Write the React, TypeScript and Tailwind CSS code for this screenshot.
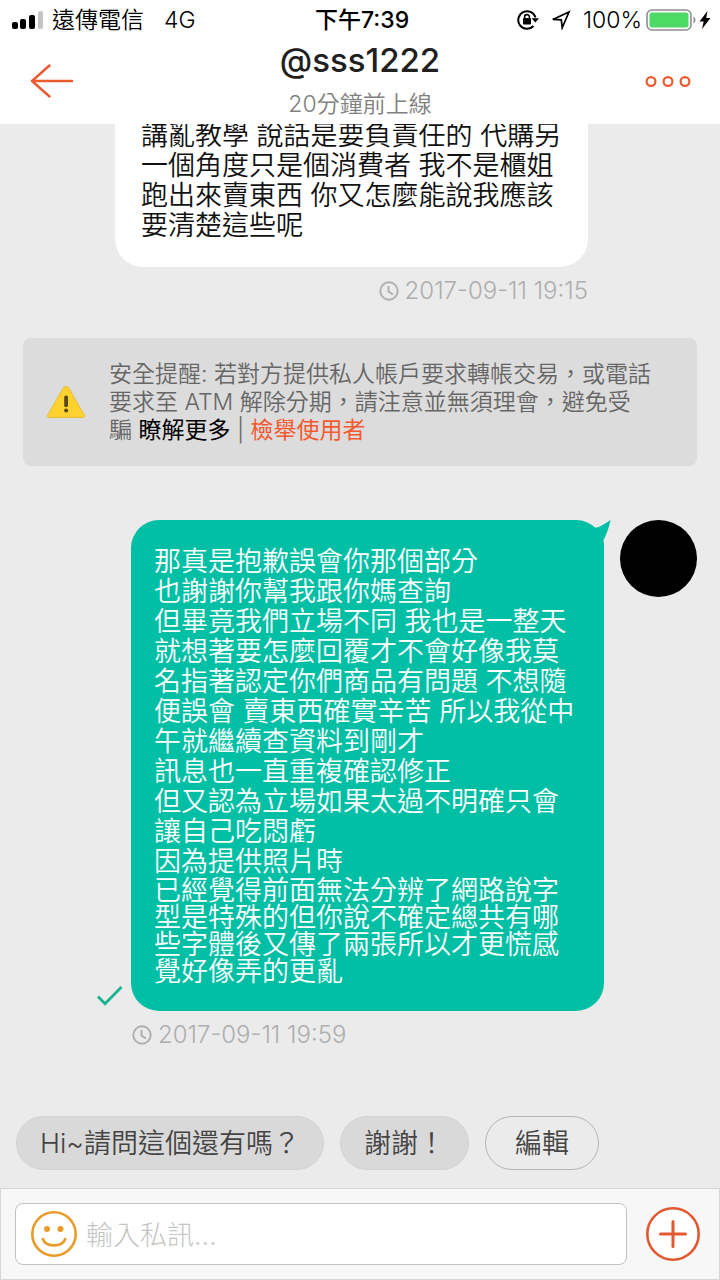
import React from "react";

const BUYER_MESSAGE =
  "講亂教學 說話是要負責任的 代購另一個角度只是個消費者 我不是櫃姐跑出來賣東西 你又怎麼能說我應該要清楚這些呢";

const MY_MESSAGE = [
  "那真是抱歉誤會你那個部分",
  "也謝謝你幫我跟你媽查詢",
  "但畢竟我們立場不同 我也是一整天就想著要怎麼回覆才不會好像我莫名指著認定你們商品有問題 不想隨便誤會 賣東西確實辛苦 所以我從中午就繼續查資料到剛才",
  "訊息也一直重複確認修正",
  "但又認為立場如果太過不明確只會讓自己吃悶虧",
  "因為提供照片時",
];

const MY_MESSAGE_END =
  "已經覺得前面無法分辨了網路說字型是特殊的但你說不確定總共有哪些字體後又傳了兩張所以才更慌感覺好像弄的更亂";

const StatusBar = () => {
  return (
    <div className="grid grid-cols-[1fr_auto_1fr] items-center h-10 pl-3 pr-2 text-[23px] leading-10 text-black">
      <div className="flex items-center gap-2">
        <svg width="32" height="20" viewBox="0 0 32 20">
          <rect x="0" y="12" width="6" height="7" rx="2" />
          <rect x="8" y="9" width="6" height="10" rx="2" />
          <rect x="17" y="5" width="6" height="14" rx="2" />
          <rect x="26" y="1" width="5" height="18" rx="2" fill="#c4c4c4" />
        </svg>
        <span className="font-[350]">遠傳電信</span>
        <span className="pl-3 font-[350]">4G</span>
      </div>
      <div className="font-medium">下午7:39</div>
      <div className="flex items-center justify-end">
        <svg width="22" height="22" viewBox="0 0 22 22" fill="none" stroke="#000" strokeWidth="2">
          <path d="M18.5 8.5A8.8 8.8 0 1 0 16.5 17" />
          <path d="M14.5 9.3h7.5l-3.7 4.2z" fill="#000" stroke="none" />
          <path d="M7.6 9.5V8a2.4 2.4 0 0 1 4.8 0v1.5" strokeWidth="1.6" />
          <rect x="6" y="9" width="8" height="6.5" rx="1" fill="#000" stroke="none" />
        </svg>
        <svg className="ml-3" width="20" height="20" viewBox="0 0 20 20" fill="none" stroke="#000" strokeWidth="1.7">
          <path d="M1.8 9.4L18 2L11.2 17.8L10.3 9.8z" strokeLinejoin="miter" />
        </svg>
        <span className="ml-3 font-[350]">100%</span>
        <svg className="ml-1" width="52" height="22" viewBox="0 0 52 22">
          <rect x="1" y="1" width="44" height="20" rx="5" fill="none" stroke="#8e8e8e" strokeWidth="1.6" />
          <rect x="3.5" y="3.5" width="39" height="15" rx="2.5" fill="#4cd964" />
          <path d="M47.5 7.5c2.6 1 2.6 6 0 7z" fill="#8e8e8e" />
        </svg>
        <svg width="14" height="20" viewBox="0 0 14 20">
          <path d="M9.5 1L1.5 11.5h4.2L4 19l8.5-11H8.2z" />
        </svg>
      </div>
    </div>
  );
};

const Header = () => {
  return (
    <header className="bg-white shrink-0">
      <StatusBar />
      <div className="grid grid-cols-[1fr_auto_1fr] items-center h-[84px] px-7">
        <button type="button" aria-label="返回" className="justify-self-start">
          <svg width="46" height="36" viewBox="0 0 46 36" fill="none" stroke="#ee5a30" strokeWidth="2.4" strokeLinecap="round" strokeLinejoin="round">
            <path d="M21.500 1.500L4 17l17.500 15.500M4 17h40" />
          </svg>
        </button>
        <div className="flex flex-col items-center">
          <h1 className="text-[33px] leading-10 font-medium text-[#202020]">@sss1222</h1>
          <p className="pt-2 pb-1 text-[23px] leading-8 text-[#808080] font-[350]">20分鐘前上線</p>
        </div>
        <button type="button" aria-label="更多" className="justify-self-end">
          <svg width="48" height="12" viewBox="0 0 48 12" fill="none" stroke="#ee5a30" strokeWidth="2.2">
            <circle cx="7" cy="5.500" r="4.400" />
            <circle cx="24" cy="5.500" r="4.400" />
            <circle cx="41" cy="5.500" r="4.400" />
          </svg>
        </button>
      </div>
    </header>
  );
};

const Timestamp = ({ value }: { value: string }) => {
  return (
    <div className="flex items-center gap-1.5 text-[24px] leading-6 font-[350] text-[#aeaeae]">
      <svg width="20" height="20" viewBox="0 0 20 20" fill="none" stroke="currentColor" strokeWidth="1.900">
        <circle cx="10" cy="10" r="8.700" />
        <path d="M9.500 5v5.500l4.500 3" />
      </svg>
      <time>{value}</time>
    </div>
  );
};

const SafetyNotice = () => {
  return (
    <div className="mx-[23px] mt-[35px] flex items-center rounded-lg bg-[#dcdcdc] pl-6 pr-4 py-[22px]">
      <svg className="shrink-0" width="38" height="34" viewBox="0 0 38 34">
        <path d="M16.500 2.500Q19 0 21.500 2.500L37 29.500Q38.500 32.500 35.500 32.500H2.500Q-.5 32.500 1 29.500z" fill="#fdd22f" stroke="#e3b526" strokeWidth=".8" />
        <rect x="17.200" y="10.500" width="3.800" height="11.500" rx="1.600" fill="#5a4718" />
        <circle cx="19.100" cy="25.600" r="2" fill="#5a4718" />
      </svg>
      <p className="pl-6 text-[23px] leading-7 font-[350] text-[#666]">
        安全提醒: 若對方提供私人帳戶要求轉帳交易，或電話
        <br />
        要求至 ATM 解除分期，請注意並無須理會，避免受
        <br />騙{" "}
        <a href="#more" className="font-normal text-black">瞭解更多</a> |{" "}
        <a href="#report" className="font-normal text-[#f4592f]">檢舉使用者</a>
      </p>
    </div>
  );
};

const QuickReplies = () => {
  return (
    <div className="flex gap-4 px-4 pt-[69px] pb-[18px] text-[27px] leading-[50px] font-[350] text-[#444]">
      <button type="button" className="rounded-full border border-[#d3d3d3] bg-[#d9d9d9] px-[23px] pt-0.5">Hi~請問這個還有嗎？</button>
      <button type="button" className="rounded-full border border-[#d3d3d3] bg-[#d9d9d9] px-[23px] pt-0.5">謝謝！</button>
      <button type="button" className="rounded-full border border-[#b4b4b4] px-[29px] pt-0.5">編輯</button>
    </div>
  );
};

const Composer = () => {
  return (
    <footer className="shrink-0 flex items-center gap-[18px] border border-[#d6d6d6] bg-[#f7f7f7] pl-[14px] pr-[18px] py-[14px]">
      <label className="flex-1 flex items-center h-[62px] rounded-lg border border-[#c2c2c2] bg-white pl-[14px] pr-4">
        <svg className="shrink-0" width="48" height="48" viewBox="0 0 48 48" fill="none" stroke="#ea9a28" strokeWidth="2.600">
          <circle cx="24" cy="24" r="21.700" />
          <circle cx="17" cy="19" r="3" fill="#ea9a28" stroke="none" />
          <circle cx="30.500" cy="19" r="3" fill="#ea9a28" stroke="none" />
          <path d="M12.800 29C16 37.500 32 37.500 35.200 29" strokeLinecap="round" />
        </svg>
        <input
          type="text"
          aria-label="輸入私訊"
          placeholder="輸入私訊..."
          className="ml-2 pt-1 w-full min-w-0 bg-transparent text-[27px] leading-10 font-light outline-none placeholder:text-[#c4c4c4]"
        />
      </label>
      <button type="button" aria-label="新增">
        <svg width="56" height="56" viewBox="0 0 56 56" fill="none" stroke="#e2592f" strokeWidth="2.600" strokeLinecap="round">
          <circle cx="28" cy="28" r="25.700" fill="#fff" />
          <path d="M28 15.500v25M15.500 28h25" strokeWidth="3" />
        </svg>
      </button>
    </footer>
  );
};

const App = () => {
  return (
    <div className="h-screen flex flex-col overflow-hidden bg-[#ebebeb] font-[Inter,'Noto_Sans_CJK_TC',sans-serif]">
      <Header />
      <main className="flex-1 min-h-0 overflow-hidden flex flex-col justify-end">
        <div className="ml-[115px] mr-[132px] flex flex-col items-end gap-3">
          <p className="w-full rounded-[28px] bg-white pl-[26px] pr-5 pt-6 pb-[26px] text-[27px] leading-[30px] font-[350] text-[#111]">
            {BUYER_MESSAGE}
          </p>
          <Timestamp value="2017-09-11 19:15" />
        </div>

        <SafetyNotice />

        <div className="mt-[54px] flex items-end pl-24 pr-[23px]">
          <svg className="mb-1 shrink-0" width="27" height="22" viewBox="0 0 27 22" fill="none" stroke="#17b394" strokeWidth="2.800">
            <path d="M2 11.500L9 18.800L25.500 2" />
          </svg>
          <div className="relative ml-2 flex-1 rounded-[28px] bg-[#00bfa5] pl-[23px] pr-5 pt-[27px] pb-[26px] text-[27px] text-white font-[350]">
            <svg className="absolute -right-[7px] top-0" width="32" height="28" viewBox="0 0 32 28" fill="#00bfa5">
              <path d="M0 4L17 7.800Q23 6 31.500 0Q29 12 24.500 20L25 28L0 28z" />
            </svg>
            <div className="relative leading-[30px]">
              {MY_MESSAGE.map((line) => (
                <p key={line}>{line}</p>
              ))}
            </div>
            <p className="leading-[27px]">{MY_MESSAGE_END}</p>
          </div>
          <div className="ml-4 size-[77px] shrink-0 self-start rounded-full bg-black" />
        </div>
        <div className="mt-3 pl-[132px]">
          <Timestamp value="2017-09-11 19:59" />
        </div>

        <QuickReplies />
      </main>
      <Composer />
    </div>
  );
};

export default App;
